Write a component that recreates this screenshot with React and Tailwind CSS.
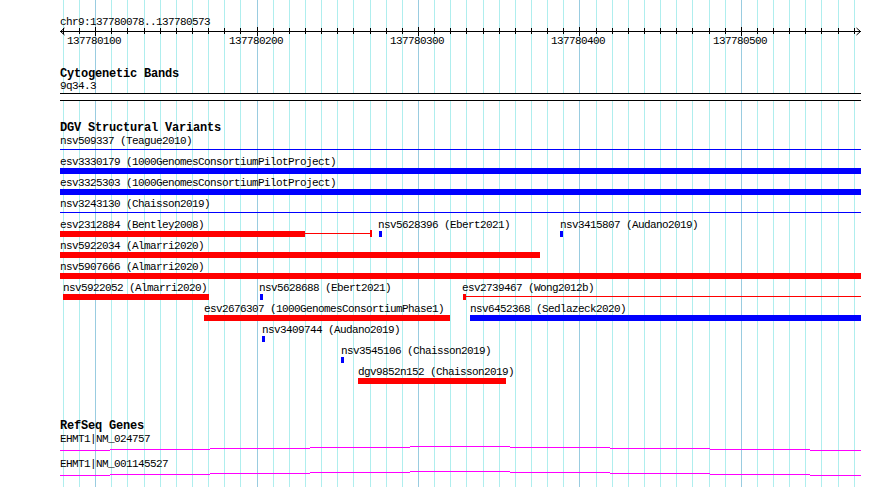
//React
import React from "react";

//grid lines, one every 10 bp, a darker one every 100 bp
const GRID = Array.from({ length: 50 }, (_, k) => ({
  x: Math.round(62.9 + 16.14 * k),
  major: k % 10 === 2,
}));

const RULER_LABELS = ["137780100", "137780200", "137780300", "137780400", "137780500"];

const BLUE = "bg-[#0000ff]";
const RED = "bg-[#ff0000]";

//parts: [x, width, y offset from bar top, height]
const VARIANTS = [
  { row: 0, label: "nsv509337 (Teague2010)", x: 60, color: BLUE, parts: [[60, 801, 2, 1]] },
  { row: 1, label: "esv3330179 (1000GenomesConsortiumPilotProject)", x: 60, color: BLUE, parts: [[60, 801, 0, 6]] },
  { row: 2, label: "esv3325303 (1000GenomesConsortiumPilotProject)", x: 60, color: BLUE, parts: [[60, 801, 0, 6]] },
  { row: 3, label: "nsv3243130 (Chaisson2019)", x: 60, color: BLUE, parts: [[60, 801, 2, 1]] },
  { row: 4, label: "esv2312884 (Bentley2008)", x: 60, color: RED, parts: [[60, 245, 0, 6], [305, 66, 2, 1], [370, 2, -1, 7]] },
  { row: 4, label: "nsv5628396 (Ebert2021)", x: 378, color: BLUE, parts: [[379, 3, 0, 6]] },
  { row: 4, label: "nsv3415807 (Audano2019)", x: 560, color: BLUE, parts: [[560, 3, 0, 6]] },
  { row: 5, label: "nsv5922034 (Almarri2020)", x: 60, color: RED, parts: [[60, 480, 0, 6]] },
  { row: 6, label: "nsv5907666 (Almarri2020)", x: 60, color: RED, parts: [[60, 801, 0, 6]] },
  { row: 7, label: "nsv5922052 (Almarri2020)", x: 63, color: RED, parts: [[63, 146, 0, 6]] },
  { row: 7, label: "nsv5628688 (Ebert2021)", x: 259, color: BLUE, parts: [[260, 3, 0, 6]] },
  { row: 7, label: "esv2739467 (Wong2012b)", x: 462, color: RED, parts: [[463, 3, 0, 6], [466, 395, 2, 1]] },
  { row: 8, label: "esv2676307 (1000GenomesConsortiumPhase1)", x: 204, color: RED, parts: [[204, 246, 0, 6]] },
  { row: 8, label: "nsv6452368 (Sedlazeck2020)", x: 470, color: BLUE, parts: [[470, 391, 0, 6]] },
  { row: 9, label: "nsv3409744 (Audano2019)", x: 262, color: BLUE, parts: [[262, 3, 0, 6]] },
  { row: 10, label: "nsv3545106 (Chaisson2019)", x: 341, color: BLUE, parts: [[341, 3, 0, 6]] },
  { row: 11, label: "dgv9852n152 (Chaisson2019)", x: 358, color: RED, parts: [[358, 148, 0, 6]] },
];

//intron connector steps: [x1, x2, drop below peak]
const HAT = [
  [60, 110, 4], [110, 210, 3], [210, 310, 2], [310, 410, 1], [410, 510, 0],
  [510, 610, 1], [610, 710, 2], [710, 810, 3], [810, 861, 4],
];

const GENES = [
  { label: "EHMT1|NM_024757", top: 1, peak: 13 },
  { label: "EHMT1|NM_001145527", top: 26, peak: 38 },
];

const Title = ({ children }) => (
  <div className="pl-[60px] text-[12px] leading-[12px] font-bold tracking-[-0.2px]">{children}</div>
);

const Ruler = () => (
  <div className="relative h-[52px]">
    <div className="absolute left-[60px] top-[17px]">chr9:137780078..137780573</div>
    <svg className="absolute left-0 top-0" width="890" height="52" shapeRendering="crispEdges">
      <line x1="60" x2="861" y1="31.5" y2="31.5" stroke="#000" />
      <path d="M64.5 28 L60.5 31.5 L64.5 35" fill="none" stroke="#000" shapeRendering="auto" />
      <path d="M856.5 28 L860.5 31.5 L856.5 35" fill="none" stroke="#000" shapeRendering="auto" />
      {GRID.map((g) => (
        <line key={g.x} x1={g.x + 0.5} x2={g.x + 0.5} y1={g.major ? 27 : 28} y2={g.major ? 36 : 34} stroke="#000" />
      ))}
    </svg>
    {GRID.filter((g) => g.major).map((g, i) => (
      <div key={g.x} className="absolute top-[36px] -translate-x-1/2" style={{ left: g.x - 1 }}>
        {RULER_LABELS[i]}
      </div>
    ))}
  </div>
);

const CytoTrack = () => (
  <div className="flex h-[58px] flex-col pt-[16px]">
    <Title>Cytogenetic Bands</Title>
    <div className="mt-[1px] pl-[60px]">9q34.3</div>
    <div className="ml-[60px] mt-[1px] h-[8px] w-[801px] border-y border-black bg-white" />
  </div>
);

const DgvTrack = () => (
  <div className="flex h-[300px] flex-col pt-[12px]">
    <Title>DGV Structural Variants</Title>
    <div className="relative h-[276px]">
      {VARIANTS.map((v) => {
        const barTop = 13 + 21 * v.row;
        return (
          <React.Fragment key={v.label}>
            <div className="absolute whitespace-nowrap" style={{ left: v.x, top: barTop - 11.5 }}>
              {v.label}
            </div>
            {v.parts.map(([x, w, y, h]) => (
              <div key={x} className={`absolute ${v.color}`} style={{ left: x, width: w, top: barTop + y, height: h }} />
            ))}
          </React.Fragment>
        );
      })}
    </div>
  </div>
);

const RefSeqTrack = () => (
  <div className="flex h-[77px] flex-col pt-[11px]">
    <div className="pl-[60px] text-[12px] leading-[11px] font-bold tracking-[-0.2px]">RefSeq Genes</div>
    <div className="relative h-[55px]">
      {GENES.map((g) => (
        <React.Fragment key={g.label}>
          <div className="absolute left-[60px]" style={{ top: g.top + 1 }}>
            {g.label}
          </div>
          <svg className="absolute left-0 top-[1px]" width="890" height="54" shapeRendering="crispEdges">
            {HAT.map(([x1, x2, d]) => (
              <line key={x1} x1={x1} x2={x2} y1={g.peak + d + 0.5} y2={g.peak + d + 0.5} stroke="#ff00ff" />
            ))}
          </svg>
        </React.Fragment>
      ))}
    </div>
  </div>
);

const App = () => {
  return (
    <div className="relative h-[487px] w-[890px] overflow-hidden bg-white font-['Liberation_Mono',monospace] text-[11px] leading-[11px] tracking-[-0.6px] text-black">
      {/* background grid */}
      <div className="absolute inset-0">
        {GRID.map((g) => (
          <div
            key={g.x}
            className={`absolute bottom-0 top-0 w-px ${g.major ? "bg-[#99cce0]" : "bg-[#afeeee]"}`}
            style={{ left: g.x }}
          />
        ))}
      </div>
      <div className="relative flex flex-col">
        <Ruler />
        <CytoTrack />
        <DgvTrack />
        <RefSeqTrack />
      </div>
    </div>
  );
};

export default App;
